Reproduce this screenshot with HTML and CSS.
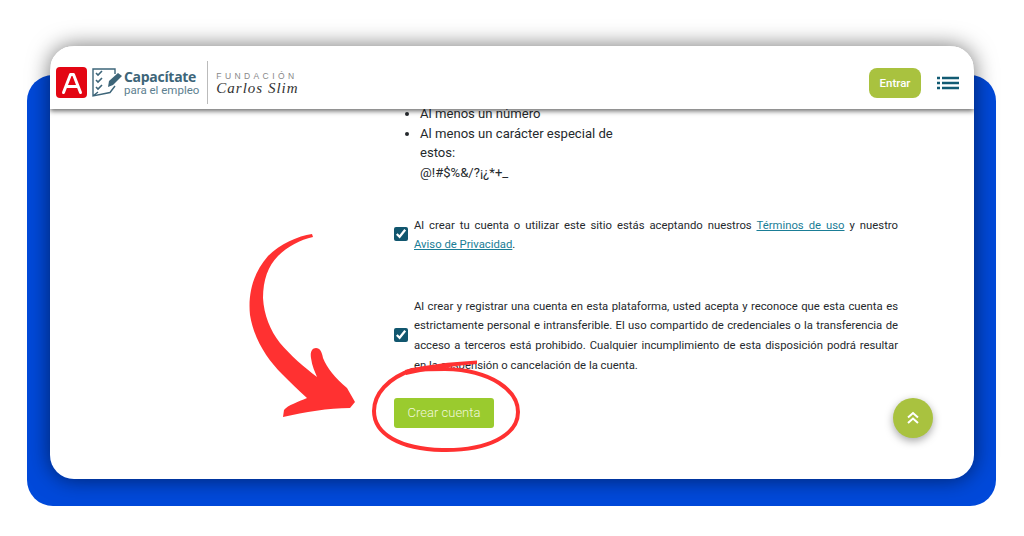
FILE: index.html
```html
<!DOCTYPE html>
<html>
<head>
    <title>Capacítate para el empleo</title>
    <meta name="viewport" content="width=device-width, initial-scale=1.0">
    <link rel="stylesheet" href="styles.css">
</head>
<body>
<div class="backdrop">
    <div class="card">
        <header class="topbar">
            <div class="logos">
                <div class="logo-a">
                    <svg width="24" height="24" viewBox="0 0 24 24"><path d="M3.5 21.5 L10.5 3.5 H13.5 L20.5 21.5 M7 15.5 H17" fill="none" stroke="#fff" stroke-width="3" stroke-linejoin="round" stroke-linecap="round"/></svg>
                </div>
                <svg class="logo-check" width="31" height="31" viewBox="0 0 31 31">
                    <path d="M23 7 V2 H1 V29 L18 25.5 L23 19 M1 29 L6 25" fill="none" stroke="#3d6579" stroke-width="1.4"/>
                    <path d="M4 6 L6 8 L10 4 M4 13 L6 15 L10 11 M4 20 L6 22 L10 18" fill="none" stroke="#3d6579" stroke-width="1.6"/>
                    <path d="M17 14 L26 6 L30 9 L21 18 L16 20 Z" fill="#3d6579"/>
                </svg>
                <div class="logo-name">
                    <div class="logo-title">Capacítate</div>
                    <div class="logo-sub">para el empleo</div>
                </div>
                <div class="logo-line"></div>
                <div class="logo-fund">
                    <div class="fund-title">FUNDACIÓN</div>
                    <div class="fund-name">Carlos Slim</div>
                </div>
            </div>
            <div class="top-actions">
                <button class="btn-enter">Entrar</button>
                <svg width="22" height="14" viewBox="0 0 22 14"><path d="M0 2 H3 M5 2 H22 M0 7 H3 M5 7 H22 M0 12 H3 M5 12 H22" stroke="#125b73" stroke-width="2.6"/></svg>
            </div>
        </header>
        <main class="content">
            <ul class="rules">
                <li>Al menos un número</li>
                <li>Al menos un carácter especial de estos:<br>@!#$%&amp;/?¡¿*+_</li>
            </ul>
            <label class="check check-terms">
                <input type="checkbox" checked>
                <span>Al crear tu cuenta o utilizar este sitio estás aceptando nuestros <a href="#">Términos de uso</a> y nuestro <a class="nowrap" href="#">Aviso de Privacidad</a>.</span>
            </label>
            <label class="check check-personal">
                <input type="checkbox" checked>
                <span>Al crear y registrar una cuenta en esta plataforma, usted acepta y reconoce que esta cuenta es estrictamente personal e intransferible. El uso compartido de credenciales o la transferencia de acceso a terceros está prohibido. Cualquier incumplimiento de esta disposición podrá resultar en la suspensión o cancelación de la cuenta.</span>
            </label>
            <button class="btn-create">Crear cuenta</button>
        </main>
        <div class="fab">
            <svg width="14" height="14" viewBox="0 0 14 14"><path d="M2 6.5 L7 2 L12 6.5 M2 12 L7 7.5 L12 12" fill="none" stroke="#fff" stroke-width="2"/></svg>
        </div>
    </div>
</div>
<!-- marks drawn over the screenshot -->
<svg class="marks" width="1024" height="536" viewBox="0 0 1024 536">
    <path fill="#ff3131" d="M312 234 C298 236 280 244 268 256 C252 274 248 296 250 315 C254 340 268 360 282 374 C290 382 298 390 307 398 C298 402 288 405 284 410 L283 417 C305 412 328 408 350 408 L355 402 L347 388 C335 378 327 368 323 358 C322 352 320 348 316 348 C312 348 310 352 311 358 C312 366 315 372 317 377 C305 368 290 355 280 343 C270 330 264 315 263 298 C263 280 268 266 278 256 C288 246 300 240 313 237 Z"/>
    <path fill="#ff3131" d="M477 360.5 C450 362 425 365 405 370 L406 375 C428 370 452 366 477 364 Z"/>
    <path fill="none" stroke="#ff3131" stroke-width="4" stroke-linecap="round" d="M412 370 C388 378 374 394 374 411 C374 434 400 449 442 450 C488 451 518 435 518 412 C518 391 492 370 445 369 C430 369 420 369 412 370"/>
</svg>
</body>
</html>
```

FILE: styles.css
```css
body { margin: 0; background: #fff; font-family: Roboto, Arial, sans-serif; color: #25292d; overflow: hidden; }
.backdrop { position: relative; width: 969px; height: 431px; margin: 75px 0 0 27px; background: #0049da; border-radius: 26px; }
.card { position: absolute; left: 23px; top: -29px; width: 924px; height: 433px; background: #fff; border-radius: 24px; overflow: hidden; }
.backdrop::before { content: ""; position: absolute; left: 23px; top: -29px; width: 924px; height: 433px; border-radius: 24px; box-shadow: 0 0 22px rgba(0,0,0,.55); }

.topbar { position: relative; z-index: 2; box-sizing: border-box; height: 63px; padding: 10px 15px 0 6px; display: flex; align-items: center; justify-content: space-between; background: #fff; box-shadow: 0 2px 5px rgba(0,0,0,.6); }
.logos { display: flex; align-items: center; }
.logo-a { width: 31px; height: 31px; background: #e30613; border-radius: 4px; display: flex; align-items: center; justify-content: center; }
.logo-check { margin-left: 5px; }
.logo-name { margin-left: 1px; color: #3d6579; }
.logo-title { font-family: "Open Sans", Arial, sans-serif; font-size: 14px; font-weight: 700; line-height: 14px; letter-spacing: -.3px; }
.logo-sub { font-family: Roboto, Arial, sans-serif; font-size: 11.5px; line-height: 12px; color: #5d7f90; }
.logo-line { width: 1px; height: 43px; background: #bbb; margin: 0 8px 0 8px; }
.fund-title { font-family: "Liberation Sans", Arial, sans-serif; font-size: 8.5px; letter-spacing: 3.4px; color: #888; line-height: 11px; }
.fund-name { font-family: "Liberation Serif", serif; font-style: italic; font-size: 15px; letter-spacing: 1px; color: #333; line-height: 13px; }

.top-actions { display: flex; align-items: center; gap: 16px; }
.btn-enter { width: 52px; height: 30px; border: none; border-radius: 8px; background: #a9c23f; color: #fff; font-family: Roboto, Arial, sans-serif; font-size: 11.5px; font-weight: 500; padding: 0; }

.content { padding: 0 76px 0 344px; margin-top: -5px; }
.rules { margin: 0; padding: 0 0 0 26px; width: 200px; font-size: 13.1px; line-height: 19.7px; }
.check { display: flex; align-items: center; gap: 6px; font-size: 11.3px; text-align: justify; }
.check input { flex: none; width: 14px; height: 14px; margin: -3px 0 0; accent-color: #11566e; }
.check a { color: #1a7d96; }
.nowrap { white-space: nowrap; }
.check-terms { margin-top: 33px; line-height: 19.5px; }
.check-personal { margin-top: 42px; line-height: 19.6px; }
.btn-create { display: block; width: 100px; height: 30px; margin-top: 23px; border: none; border-radius: 3px; background: #9acb2e; color: #f1f7dc; font-family: Roboto, Arial, sans-serif; font-size: 13px; font-weight: 300; padding: 0 0 2px; }

.fab { position: absolute; left: 843px; top: 352px; width: 40px; height: 40px; border-radius: 50%; background: #a9c23f; box-shadow: 0 3px 8px rgba(0,0,0,.35); display: flex; align-items: center; justify-content: center; }
.marks { position: absolute; left: 0; top: 0; pointer-events: none; }
```
